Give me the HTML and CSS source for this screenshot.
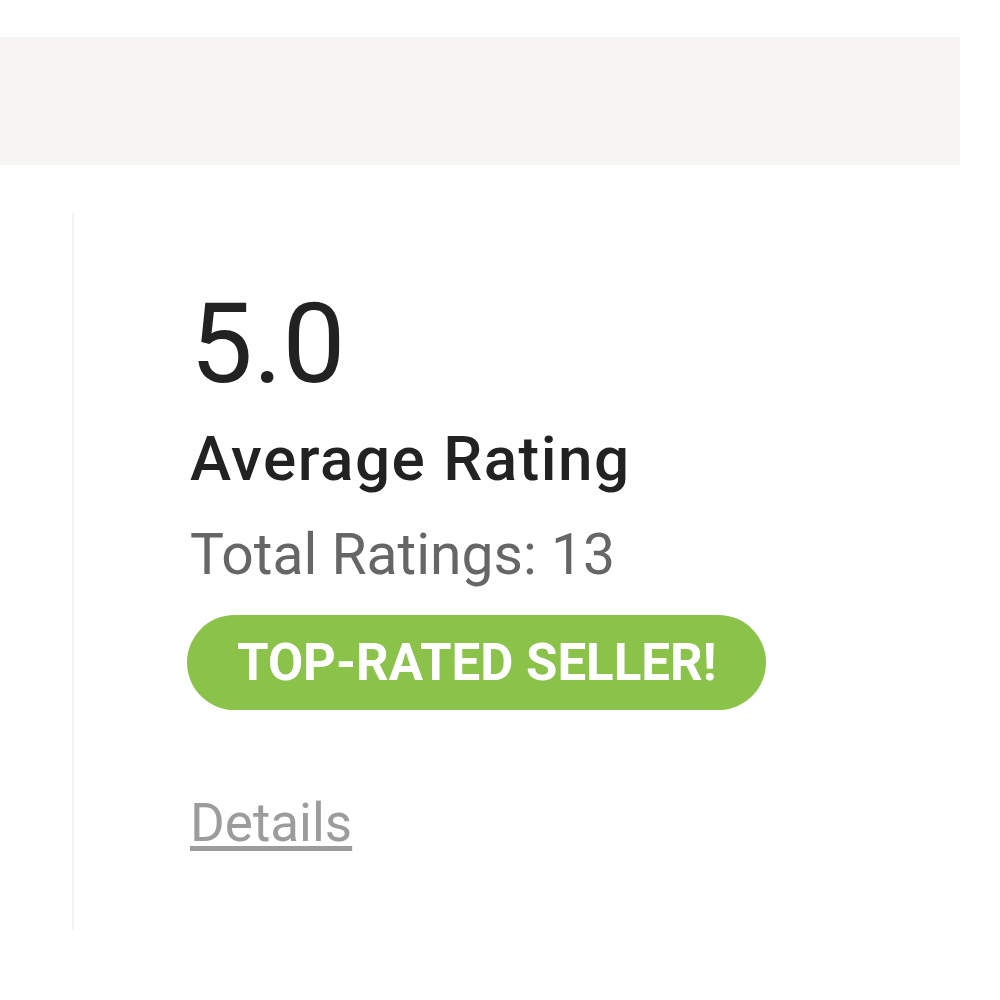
FILE: index.html
```html
<!DOCTYPE html>
<html lang="en">
<head>
<meta charset="utf-8">
<title>Rating</title>
<link rel="stylesheet" href="styles.css">
</head>
<body>
  <div class="band"></div>
  <section class="rating-panel">
    <div class="rating-score">5.0</div>
    <h2 class="rating-title">Average Rating</h2>
    <p class="rating-total">Total Ratings: 13</p>
    <span class="badge">TOP-RATED SELLER!</span>
    <a class="details-link" href="#">Details</a>
  </section>
</body>
</html>
```
FILE: styles.css
```css
html, body {
  margin: 0;
  padding: 0;
  background: #ffffff;
}
body {
  font-family: Roboto, "Liberation Sans", Arial, sans-serif;
  width: 1000px;
  height: 1000px;
  overflow: hidden;
}
.band {
  margin-top: 37px;
  width: 960px;
  height: 128px;
  background: #f6f5f1;
}
.rating-panel {
  margin-top: 48px;
  margin-left: 72px;
  height: 717px;
  border-left: 2px solid #f2f2f2;
  padding-left: 116px;
  display: flex;
  flex-direction: column;
  align-items: flex-start;
  box-sizing: border-box;
}
.rating-score {
  margin-top: 75px;
  font-size: 112px;
  line-height: 1;
  color: #222222;
  font-weight: 400;
  letter-spacing: 0;
}
.rating-title {
  margin: 28px 0 0;
  font-size: 62px;
  line-height: 1;
  font-weight: 500;
  color: #222222;
  letter-spacing: 1.5px;
}
.rating-total {
  margin: 36px 0 0;
  font-size: 57px;
  line-height: 1;
  color: #666666;
}
.badge {
  margin-top: 32px;
  margin-left: -3px;
  height: 95px;
  box-sizing: border-box;
  padding: 0 50px;
  display: flex;
  align-items: center;
  border-radius: 48px;
  background: #8bc34a;
  color: #ffffff;
  font-weight: 700;
  font-size: 51px;
  letter-spacing: 0;
}
.details-link {
  margin-top: 87px;
  font-size: 53px;
  line-height: 1;
  color: #9c9c9c;
  text-decoration: underline;
  text-underline-offset: 5px;
}
```
